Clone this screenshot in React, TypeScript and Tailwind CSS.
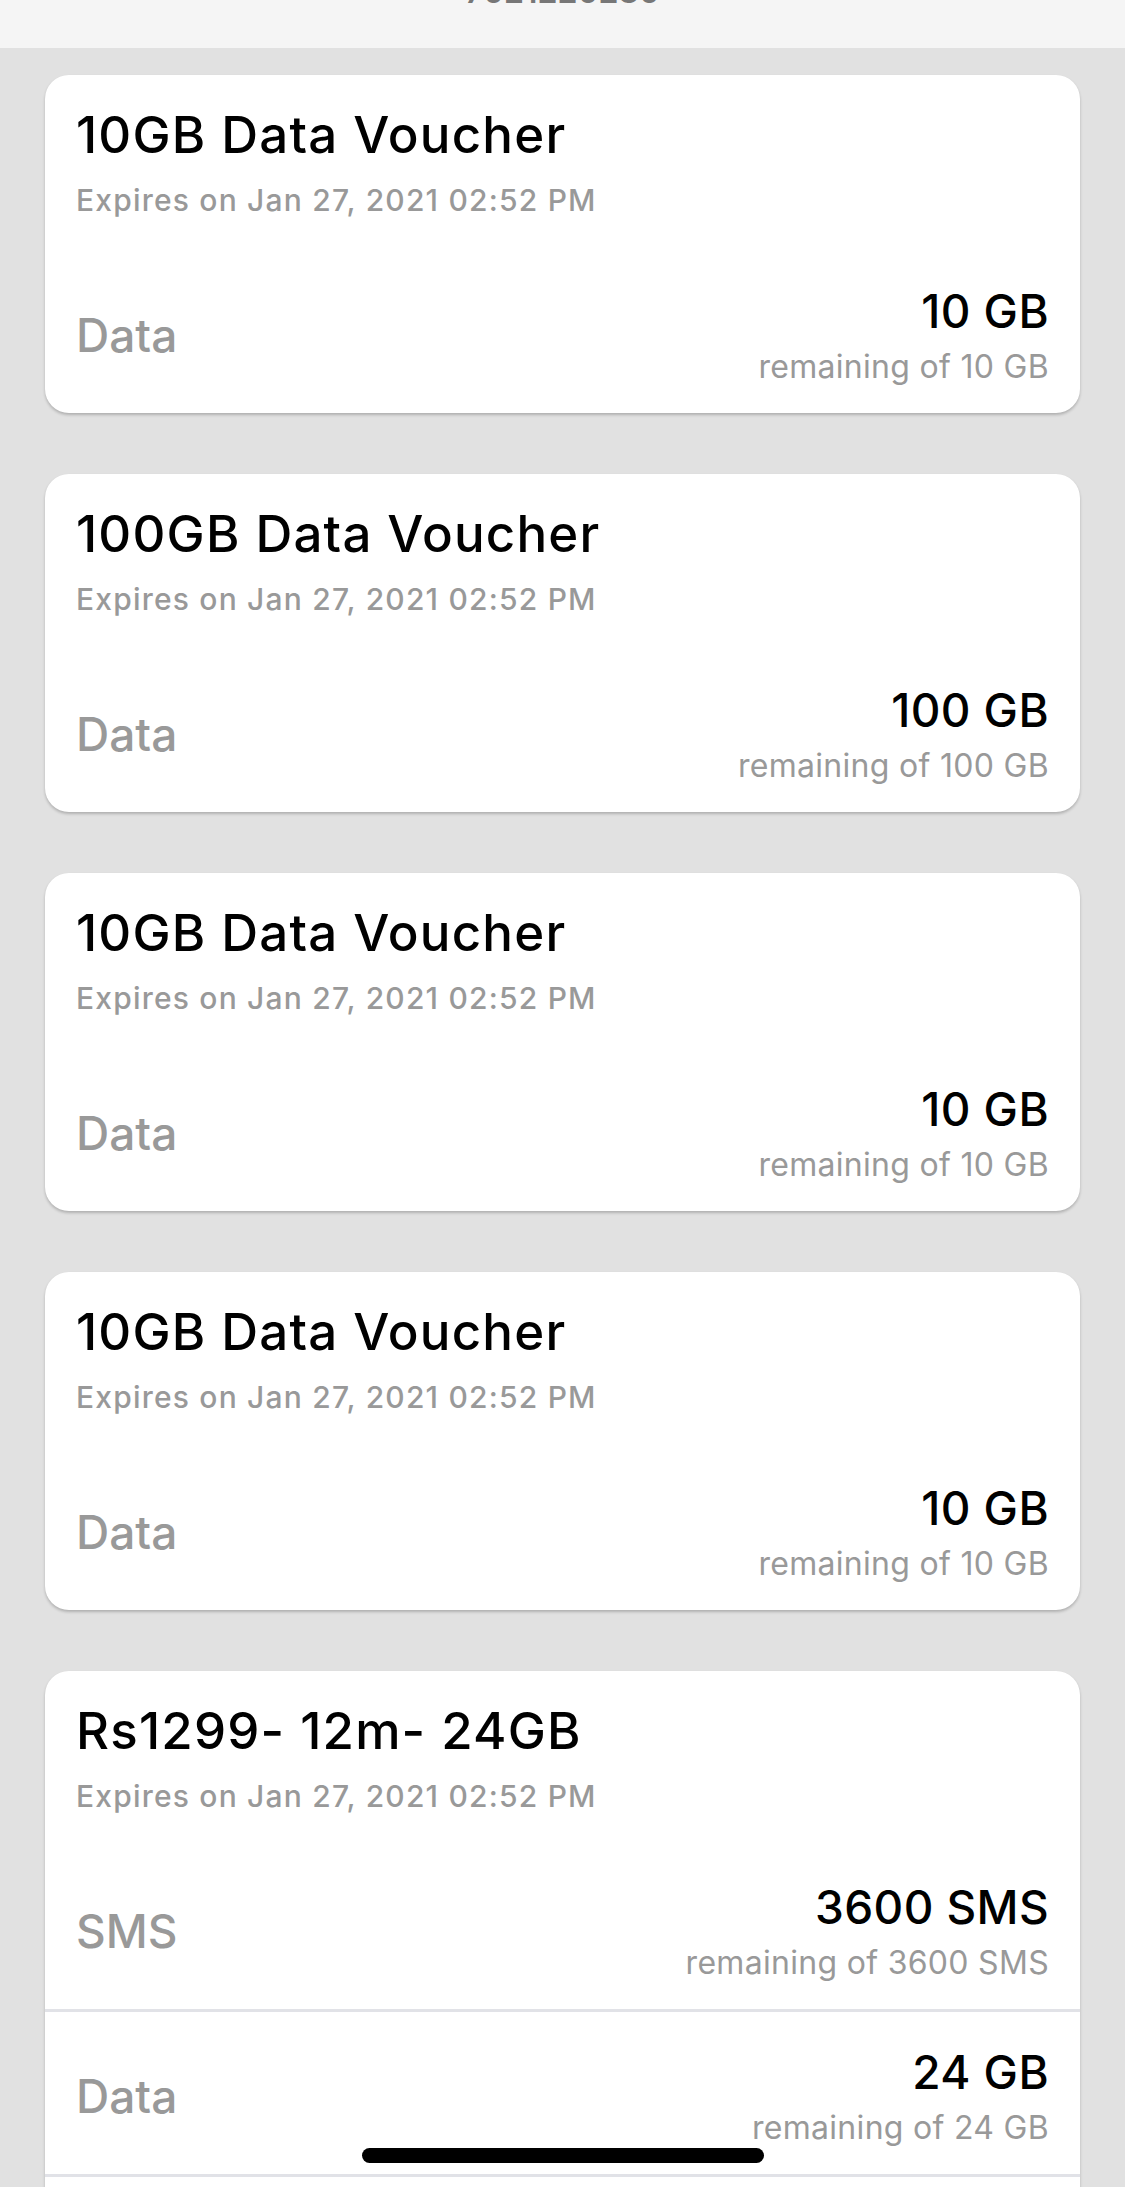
import React from "react";

type Row = { label: string; value: string; total: string };
type Card = { title: string; expires: string; rows: Row[]; continues?: boolean };

const EXP = "Expires on Jan 27, 2021 02:52 PM";

const cards: Card[] = [
  { title: "10GB Data Voucher", expires: EXP, rows: [{ label: "Data", value: "10 GB", total: "10 GB" }] },
  { title: "100GB Data Voucher", expires: EXP, rows: [{ label: "Data", value: "100 GB", total: "100 GB" }] },
  { title: "10GB Data Voucher", expires: EXP, rows: [{ label: "Data", value: "10 GB", total: "10 GB" }] },
  { title: "10GB Data Voucher", expires: EXP, rows: [{ label: "Data", value: "10 GB", total: "10 GB" }] },
  {
    title: "Rs1299- 12m- 24GB",
    expires: EXP,
    rows: [
      { label: "SMS", value: "3600 SMS", total: "3600 SMS" },
      { label: "Data", value: "24 GB", total: "24 GB" },
    ],
    continues: true,
  },
];

function BalanceRow({ row, first }: { row: Row; first: boolean }) {
  return (
    <div
      className={
        first
          ? "flex items-center justify-between px-[31px] pt-[33px] pb-[27px]"
          : "flex items-center justify-between px-[31px] pt-[33px] pb-[27px] border-t-[3px] border-[#e1e2e7]"
      }
    >
      <span className="text-[46px] leading-[54px] font-medium text-[#999999]">{row.label}</span>
      <div className="flex flex-col items-end">
        <span className="text-[46px] leading-[54px] font-medium tracking-[0.4px] text-black">{row.value}</span>
        <span className="mt-[10px] text-[32px] leading-[38px] tracking-[0.3px] text-[#999999]">
          remaining of {row.total}
        </span>
      </div>
    </div>
  );
}

function VoucherCard({ card }: { card: Card }) {
  return (
    <section className="overflow-hidden rounded-[24px] bg-white shadow-[0_2px_3px_rgba(0,0,0,0.22)]">
      <div className="px-[31px] pt-[30px] pb-[33px]">
        <h2 className="text-[51px] leading-[60px] font-medium tracking-[1.2px] text-black">{card.title}</h2>
        <p className="mt-[17px] text-[30px] leading-[36px] font-medium tracking-[1.2px] text-[#999999]">
          {card.expires}
        </p>
      </div>
      {card.rows.map((r, i) => (
        <BalanceRow key={i} row={r} first={i === 0} />
      ))}
      {card.continues && <div className="h-[160px] border-t-[3px] border-[#e1e2e7]" />}
    </section>
  );
}

export default function App() {
  return (
    <div className="relative h-[2187px] w-[1125px] overflow-hidden bg-[#e1e1e1] font-['Inter',sans-serif]">
      <header className="flex h-[48px] justify-center overflow-hidden bg-[#f5f5f5]">
        <div className="-mt-[24px] text-[32px] leading-[32px] font-semibold text-[#777777]">7021220230</div>
      </header>
      <main className="flex flex-col gap-[61px] px-[45px] pt-[27px]">
        {cards.map((c, i) => (
          <VoucherCard key={i} card={c} />
        ))}
      </main>
      <div className="absolute bottom-[24px] left-1/2 h-[15px] w-[402px] -translate-x-1/2 rounded-full bg-black" />
    </div>
  );
}
